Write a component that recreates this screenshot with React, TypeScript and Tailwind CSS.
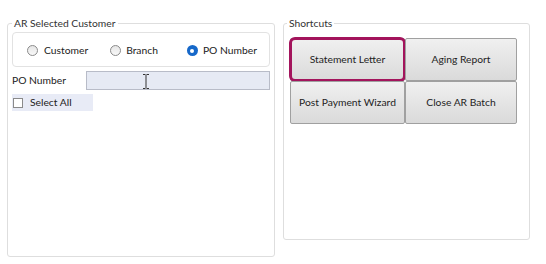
import React from 'react';

const Radio = ({ checked }: { checked?: boolean }) =>
  checked ? (
    <span className="flex h-[11px] w-[11px] items-center justify-center rounded-full bg-[#1668c9]">
      <span className="h-[4px] w-[4px] rounded-full bg-white" />
    </span>
  ) : (
    <span className="h-[11px] w-[11px] rounded-full border border-[#8a8a8a] bg-gradient-to-b from-[#e6e6e6] to-[#f8f8f8]" />
  );

const ShortcutButton = ({ label, focused }: { label: string; focused?: boolean }) => (
  <div className="relative">
    <button className="flex h-[43px] w-full items-center justify-center rounded-[2px] border border-[#a0a0a0] bg-gradient-to-b from-[#f0f0f0] to-[#dadada] text-[#1e1e1e]">
      {label}
    </button>
    {focused && (
      <div className="pointer-events-none absolute inset-[-1px] rounded-[6px] border-[3px] border-[#a3145c]" />
    )}
  </div>
);

const App: React.FC = () => {
  return (
    <div className="flex h-[264px] w-[546px] items-start gap-[8px] bg-white pl-[7px] pt-[16px] font-['Lato',sans-serif] text-[10.3px] whitespace-nowrap text-[#222]">
      <fieldset className="h-[241px] w-[268px] min-w-0 rounded-[3px] border border-[#dedede] px-[4px]">
        <legend className="px-[2px] leading-[14px] text-[#333]">AR Selected Customer</legend>
        <div className="mt-[2px] flex h-[35px] items-center rounded-[4px] border border-[#e2e2e2] pl-[14px] pt-[2px]">
          <label className="flex items-center gap-[6px]">
            <Radio />
            Customer
          </label>
          <label className="ml-[22px] flex items-center gap-[5px]">
            <Radio />
            Branch
          </label>
          <label className="ml-[29px] flex items-center gap-[5px]">
            <Radio checked />
            PO Number
          </label>
        </div>
        <div className="mt-[4px] flex items-center">
          <span className="w-[74px]">PO Number</span>
          <div className="relative h-[19px] flex-1 border border-[#b8bcc8] bg-[#e6eaf4]">
            <svg className="absolute left-[55px] top-[2px]" width="8" height="15" viewBox="0 0 8 15">
              <path d="M1 0.5h2.5M4.5 0.5H7M4 1v13M1 14.5h2.5M4.5 14.5H7" stroke="#333" strokeWidth="1" fill="none" />
            </svg>
          </div>
        </div>
        <div className="mt-[4px] flex h-[17px] w-[81px] items-center gap-[7px] bg-[#e8ebf6] pl-[1px]">
          <span className="h-[10px] w-[10px] border border-[#8a8a8a] bg-white" />
          Select All
        </div>
      </fieldset>
      <fieldset className="h-[224px] w-[247px] min-w-0 rounded-[3px] border border-[#dedede] px-[6px]">
        <legend className="ml-[-3px] px-[2px] leading-[14px] text-[#333]">Shortcuts</legend>
        <div className="mt-[8px] grid w-[227px] grid-cols-[115px_112px]">
          <ShortcutButton label="Statement Letter" focused />
          <ShortcutButton label="Aging Report" />
          <ShortcutButton label="Post Payment Wizard" />
          <ShortcutButton label="Close AR Batch" />
        </div>
      </fieldset>
    </div>
  );
};

export default App;
